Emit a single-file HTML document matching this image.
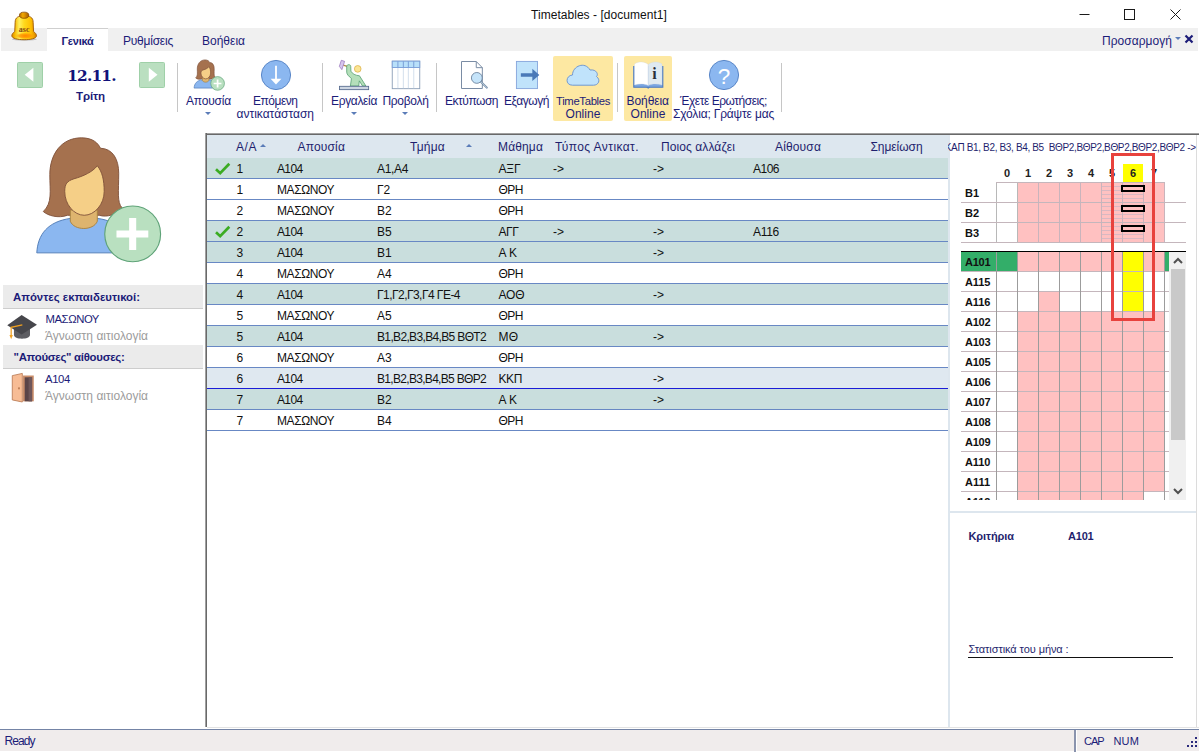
<!DOCTYPE html>
<html lang="el">
<head>
<meta charset="utf-8">
<title>Timetables - [document1]</title>
<style>
*{box-sizing:border-box;margin:0;padding:0}
html,body{width:1199px;height:752px;overflow:hidden;background:#fff}
body{position:relative;font-family:"Liberation Sans",sans-serif;font-size:12px;color:#1c1c78}
.abs{position:absolute}
.t{position:absolute;white-space:pre;color:#1c1c78}
svg{position:absolute;overflow:visible}
#tabbar{left:1px;top:28px;width:1197px;height:23px;background:#f0f0f0}
#tab1{left:47px;top:28px;width:61px;height:23px;background:#fff;border-top:1px solid #cfcfcf}
.sep{position:absolute;width:1px;background:#c6c6c6;top:63px;height:49px}
.hl{position:absolute;background:#fde8a2;border-radius:2px}
.nav{position:absolute;top:62px;width:26px;height:26px;background:#badfc0;border:1px solid #9fd0a8;border-radius:1.5px}
.dd{position:absolute;width:0;height:0;border-left:3px solid transparent;border-right:3px solid transparent;border-top:3px solid #5b7cb8}
.sec{position:absolute;left:3px;width:200px;height:24px;background:#ebebeb;border-bottom:1px solid #cdcdcd}
.row{position:absolute;left:207px;width:741px;height:21px;border-bottom:1px solid #6888c4;background:#fff}
.teal{background:#c9dedd}
.sel{background:#dfe8f0;border-bottom-color:#1c1cd8}
.hdr{position:absolute;left:207px;top:135px;width:741px;height:23px;background:#dde7ef}
.k{color:#101010}
.up{position:absolute;width:0;height:0;border-left:3px solid transparent;border-right:3px solid transparent;border-bottom:3px solid #5b7cb8}
#status{left:0;top:729px;width:1199px;height:22px;background:#f0ecec;border-top:1px solid #7484a6}
</style>
</head>
<body>
<!-- part_title -->
<div id="tabbar" class="abs"></div><div id="tab1" class="abs"></div>
<svg style="left:5px;top:5px" width="40" height="40" viewBox="0 0 752 752">
<defs>
<linearGradient id="bg1" x1="0" x2="1" y1="0" y2="0"><stop offset="0" stop-color="#d98600"/><stop offset=".12" stop-color="#f7b800"/><stop offset=".3" stop-color="#fff060"/><stop offset=".5" stop-color="#ffd91c"/><stop offset=".78" stop-color="#ffbe00"/><stop offset="1" stop-color="#d47e00"/></linearGradient>
<radialGradient id="bg2" cx=".5" cy=".5" r=".5"><stop offset="0" stop-color="#ff8400"/><stop offset=".6" stop-color="#ff9a00" stop-opacity=".8"/><stop offset="1" stop-color="#ffb000" stop-opacity="0"/></radialGradient>
<linearGradient id="bg3" x1="0" x2="1"><stop offset="0" stop-color="#b86a00"/><stop offset=".35" stop-color="#f0a800"/><stop offset=".6" stop-color="#d88c00"/><stop offset="1" stop-color="#a05800"/></linearGradient>
</defs>
<ellipse cx="365" cy="645" rx="235" ry="26" fill="#000" opacity=".2"/>
<path d="M190,330 C190,225 255,205 360,205 C465,205 530,225 530,330 L537,498 C565,520 592,545 592,578 C592,632 480,652 360,652 C240,652 128,632 128,578 C128,545 155,520 183,498 Z" fill="url(#bg1)" stroke="#9a5400" stroke-width="16"/>
<ellipse cx="380" cy="580" rx="190" ry="62" fill="url(#bg2)"/>
<ellipse cx="360" cy="192" rx="88" ry="58" fill="url(#bg3)" stroke="#804400" stroke-width="14"/>
<text x="360" y="508" text-anchor="middle" font-family="Liberation Serif,serif" font-weight="bold" font-size="150" fill="#8a4a12">asc</text>
</svg>
<div class="t" style="left:531px;top:7.84px;font:12px 'Liberation Sans';line-height:14px;letter-spacing:0.04px;color:#111;">Timetables - [document1]</div>
<svg style="left:1070px;top:0" width="129" height="28" viewBox="0 0 129 28" fill="none" stroke="#1a1a1a" stroke-width="1">
<path d="M9.5,14.5h10"/><rect x="54.5" y="9.5" width="10" height="10"/><path d="M100.5,9.5l10,10M110.5,9.5l-10,10"/></svg>
<div class="t" style="left:61.5px;top:34.69px;font:bold 11px 'Liberation Sans';line-height:13px;letter-spacing:-0.26px;">Γενικά</div>
<div class="t" style="left:123px;top:33.84px;font:12px 'Liberation Sans';line-height:14px;letter-spacing:-0.23px;">Ρυθμίσεις</div>
<div class="t" style="left:202px;top:33.84px;font:12px 'Liberation Sans';line-height:14px;letter-spacing:0.00px;">Βοήθεια</div>
<div class="t" style="left:1102px;top:33.84px;font:12px 'Liberation Sans';line-height:14px;letter-spacing:0.04px;">Προσαρμογή</div>
<div class="dd" style="left:1174.5px;top:37px;border-left-width:3px;border-right-width:3px;border-top-width:3px"></div>
<svg style="left:1184px;top:34px" width="10" height="10" viewBox="0 0 10 10"><path d="M1.5,1.5l7,7M8.5,1.5l-7,7" stroke="#1c1c78" stroke-width="2.2" fill="none"/></svg>
<!-- part_ribbon -->
<div class="nav" style="left:17px"></div><div class="nav" style="left:139px"></div>
<svg style="left:17px;top:62px" width="26" height="26" viewBox="0 0 26 26"><path d="M16.4,5.7 L7.7,12.7 L16.4,19.7 Z" fill="#fff"/></svg>
<svg style="left:139px;top:62px" width="26" height="26" viewBox="0 0 26 26"><path d="M9.8,5.7 L18.5,12.7 L9.8,19.7 Z" fill="#fff"/></svg>
<div class="t" style="left:67.2px;top:66.71px;font:bold 15.3px 'DejaVu Serif';line-height:18px;letter-spacing:-0.77px;color:#12127a;">12.11.</div>
<div class="t" style="left:76px;top:89.52px;font:bold 11.5px 'Liberation Sans';line-height:13px;letter-spacing:-0.10px;">Τρίτη</div>
<div class="sep" style="left:177px"></div>
<div class="sep" style="left:322px"></div>
<div class="sep" style="left:436px"></div>
<div class="sep" style="left:617px"></div>
<div class="sep" style="left:781px"></div>
<div class="hl" style="left:553px;top:56px;width:60px;height:65px"></div>
<div class="hl" style="left:624px;top:56px;width:48px;height:65px"></div>
<svg style="left:189.9px;top:57.9px" width="39.2" height="34.3" viewBox="0 0 859 752"><path d="M330,42 C392,42 420,72 432,98 C500,100 530,160 530,232 C530,330 520,388 548,418 C520,452 470,472 425,458 L255,458 C205,476 150,460 125,438 C175,390 160,330 160,240 C160,130 222,42 330,42 Z" fill="#a5714e" stroke="#80523a" stroke-width="15"/>
<path d="M90,660 C95,560 150,492 270,475 L415,475 C445,478 470,486 495,497 L495,660 Z" fill="#8bb7f0" stroke="#4e7ab5" stroke-width="15"/>
<path d="M270,430 L270,490 C290,542 395,542 415,490 L415,430 Z" fill="#deb46e" stroke="#a8813f" stroke-width="15"/>
<path d="M240,330 C240,290 252,274 290,262 C340,248 390,225 415,192 C442,225 452,270 452,330 C452,400 400,458 345,458 C290,458 240,400 240,330 Z" fill="#f5cf87" stroke="#80523a" stroke-width="15"/>
<circle cx="605" cy="558" r="150" fill="#b9e0c0" stroke="#5fa378" stroke-width="15"/>
<path d="M586,473h38v67h65v38h-65v67h-38v-67h-68v-38h68z" fill="#fff"/></svg>
<svg style="left:260px;top:59px" width="32" height="32" viewBox="-16 -16 32 32"><circle r="14.6" fill="#8bb7f0" stroke="#5a87c8" stroke-width="1"/><path d="M0,-9.2V5" stroke="#fff" stroke-width="1.8" fill="none"/><path d="M-5.4,3.8H5.4L0,9.6Z" fill="#fff"/></svg>
<svg style="left:335px;top:56px" width="40" height="38" viewBox="0 0 792 752">
<path d="M165,180 L238,206" stroke="#b48a42" stroke-width="24"/>
<path d="M125,85 L190,106 L136,270 L86,205 Z" fill="#d6c6ee" stroke="#8e68b4" stroke-width="13"/>
<path d="M232,205 C232,160 312,160 312,205 L315,300 C340,350 400,385 485,392 L612,594 L545,594 L482,492 L470,594 L305,594 L325,445 C270,400 232,360 232,320 Z" fill="#b4dfba" stroke="#4d9a6a" stroke-width="15"/>
<circle cx="450" cy="255" r="66" fill="#fbe594" stroke="#dcb04a" stroke-width="15"/>
<rect x="88" y="600" width="578" height="66" fill="#cdd6e2" stroke="#566a8e" stroke-width="17"/>
</svg>
<svg style="left:330px;top:55px" width="100" height="40" viewBox="0 0 1200 480">
<rect x="747" y="74" width="330" height="330" fill="#fff" stroke="#8da0b8" stroke-width="11"/>
<rect x="747" y="74" width="330" height="76" fill="#b8e0fa" stroke="#7a9fd8" stroke-width="11"/>
<path d="M815,74V150M880,74V150M940,74V150M1005,74V150" stroke="#7a9fd8" stroke-width="12"/>
<path d="M815,156V398M880,156V398M940,156V398M1005,156V398" stroke="#d3dfec" stroke-width="12"/>
</svg>
<svg style="left:450px;top:55px" width="100" height="40" viewBox="0 0 1200 480">
<path d="M138,78 L315,78 L388,152 L388,402 L138,402 Z" fill="#fff" stroke="#7a8ca4" stroke-width="12"/>
<path d="M315,78 L315,152 L388,152" fill="none" stroke="#7a8ca4" stroke-width="12"/>
<path d="M372,322 L442,392" stroke="#6e86a0" stroke-width="24" stroke-linecap="round"/>
<path d="M376,326 L440,390" stroke="#d5e6f3" stroke-width="9" stroke-linecap="round"/>
<circle cx="322" cy="275" r="65" fill="#c5e4fa" stroke="#6e86a0" stroke-width="11"/>
<rect x="797" y="77" width="253" height="326" fill="#c0e3fb" stroke="#86a6dc" stroke-width="11"/>
<path d="M850,218 H988 V165 L1072,240 L988,312 V262 H850 Z" fill="#4a79b8"/>
</svg>
<svg style="left:560px;top:55px" width="120" height="40" viewBox="0 0 1200 400">
<path d="M125,302 C50,302 55,205 125,200 C125,110 250,60 300,150 C370,140 385,200 365,215 C410,250 385,302 335,302 Z" fill="#c0e3fb" stroke="#6590d0" stroke-width="9"/>
<path d="M738,110 L738,322 L1028,322 L1028,110" fill="#7aa5e0" stroke="#4a78c0" stroke-width="11"/>
<path d="M745,90 C790,60 850,65 882,95 L882,305 C850,285 790,285 745,300 Z" fill="#fff" stroke="#c8d4e0" stroke-width="3"/>
<path d="M1020,90 C975,60 915,65 882,95 L882,305 C915,285 975,285 1020,300 Z" fill="#dfe9f0" stroke="#c8d4e0" stroke-width="3"/>
<path d="M862,322 L882,338 L902,322 Z" fill="#4a78c0"/>
<text x="945" y="242" text-anchor="middle" font-family="Liberation Serif,serif" font-weight="bold" font-size="160" fill="#2a2f3a">i</text>
</svg>
<svg style="left:708px;top:59px" width="32" height="32" viewBox="-16 -16 32 32"><circle r="14.6" fill="#8bb7f0" stroke="#5a87c8" stroke-width="1"/><text x="0" y="8.6" text-anchor="middle" font-family="Liberation Sans,sans-serif" font-size="22.5" fill="#fff">?</text></svg>
<div class="t" style="left:186px;top:93.84px;font:12px 'Liberation Sans';line-height:14px;letter-spacing:-0.19px;">Απουσία</div>
<div class="t" style="left:253px;top:93.84px;font:12px 'Liberation Sans';line-height:14px;letter-spacing:-0.49px;">Επόμενη</div>
<div class="t" style="left:236.5px;top:106.84px;font:12px 'Liberation Sans';line-height:14px;letter-spacing:-0.01px;">αντικατάσταση</div>
<div class="t" style="left:331px;top:93.84px;font:12px 'Liberation Sans';line-height:14px;letter-spacing:-0.34px;">Εργαλεία</div>
<div class="t" style="left:382.5px;top:93.84px;font:12px 'Liberation Sans';line-height:14px;letter-spacing:-0.31px;">Προβολή</div>
<div class="t" style="left:445px;top:93.84px;font:12px 'Liberation Sans';line-height:14px;letter-spacing:-0.48px;">Εκτύπωση</div>
<div class="t" style="left:504px;top:93.84px;font:12px 'Liberation Sans';line-height:14px;letter-spacing:-0.44px;">Εξαγωγή</div>
<div class="t" style="left:556px;top:94.58px;font:11.3px 'Liberation Sans';line-height:13px;letter-spacing:-0.33px;">TimeTables</div>
<div class="t" style="left:565.5px;top:106.84px;font:12px 'Liberation Sans';line-height:14px;letter-spacing:0.05px;">Online</div>
<div class="t" style="left:626.5px;top:93.84px;font:12px 'Liberation Sans';line-height:14px;letter-spacing:-0.07px;">Βοήθεια</div>
<div class="t" style="left:630.5px;top:106.84px;font:12px 'Liberation Sans';line-height:14px;letter-spacing:0.05px;">Online</div>
<div class="t" style="left:680px;top:93.84px;font:12px 'Liberation Sans';line-height:14px;letter-spacing:-0.47px;">Έχετε Ερωτήσεις;</div>
<div class="t" style="left:673px;top:106.84px;font:12px 'Liberation Sans';line-height:14px;letter-spacing:-0.17px;">Σχόλια; Γράψτε μας</div>
<div class="dd" style="left:205px;top:112px"></div>
<div class="dd" style="left:350.5px;top:112px"></div>
<div class="dd" style="left:402px;top:112px"></div>
<!-- part_left -->
<svg style="left:20px;top:130px" width="160" height="140" viewBox="0 0 859 752"><path d="M330,42 C392,42 420,72 432,98 C500,100 530,160 530,232 C530,330 520,388 548,418 C520,452 470,472 425,458 L255,458 C205,476 150,460 125,438 C175,390 160,330 160,240 C160,130 222,42 330,42 Z" fill="#a5714e" stroke="#80523a" stroke-width="5"/>
<path d="M90,660 C95,560 150,492 270,475 L415,475 C445,478 470,486 495,497 L495,660 Z" fill="#8bb7f0" stroke="#4e7ab5" stroke-width="5"/>
<path d="M270,430 L270,490 C290,542 395,542 415,490 L415,430 Z" fill="#deb46e" stroke="#a8813f" stroke-width="5"/>
<path d="M240,330 C240,290 252,274 290,262 C340,248 390,225 415,192 C442,225 452,270 452,330 C452,400 400,458 345,458 C290,458 240,400 240,330 Z" fill="#f5cf87" stroke="#80523a" stroke-width="5"/>
<circle cx="605" cy="558" r="150" fill="#b9e0c0" stroke="#5fa378" stroke-width="6"/>
<path d="M586,473h38v67h65v38h-65v67h-38v-67h-68v-38h68z" fill="#fff"/></svg>
<div class="sec" style="top:285px"></div><div class="sec" style="top:345px"></div>
<div class="t" style="left:13px;top:290.55px;font:bold 11.4px 'Liberation Sans';line-height:13px;letter-spacing:-0.01px;">Απόντες εκπαιδευτικοί:</div>
<div class="t" style="left:13.5px;top:350.55px;font:bold 11.4px 'Liberation Sans';line-height:13px;letter-spacing:-0.27px;">&quot;Απούσες&quot; αίθουσες:</div>
<div class="t" style="left:45.5px;top:312.58px;font:11.3px 'Liberation Sans';line-height:13px;letter-spacing:-0.43px;">ΜΑΣΩΝΟΥ</div>
<div class="t" style="left:45px;top:328.84px;font:12px 'Liberation Sans';line-height:14px;letter-spacing:0.01px;color:#9c9c9c;">Άγνωστη αιτιολογία</div>
<div class="t" style="left:45px;top:372.58px;font:11.3px 'Liberation Sans';line-height:13px;letter-spacing:-0.35px;">Α104</div>
<div class="t" style="left:45px;top:388.84px;font:12px 'Liberation Sans';line-height:14px;letter-spacing:0.01px;color:#9c9c9c;">Άγνωστη αιτιολογία</div>
<svg style="left:0;top:305px" width="60" height="105" viewBox="0 0 430 752">
<path d="M100,165 L100,215 C100,250 215,250 215,215 L215,165 Z" fill="#5d5d62"/>
<path d="M155,72 L265,141 L155,211 L52,145 Z" fill="#46464b"/>
<path d="M160,143 L80,160 L80,222" fill="none" stroke="#f0a020" stroke-width="9"/>
<path d="M68,215 L92,215 L80,245 Z" fill="#f0a020"/>
<rect x="165" y="505" width="77" height="185" fill="#c98d6a"/>
<rect x="177" y="518" width="53" height="172" fill="#5a4448"/>
<rect x="205" y="518" width="25" height="172" fill="#6e565a"/>
<path d="M88,506 L160,490 L160,695 L88,680 Z" fill="#f7bc95" stroke="#b87850" stroke-width="6"/>
<rect x="130" y="590" width="12" height="14" fill="#b87850"/>
</svg>
<!-- part_grid -->
<div class="abs" style="left:205px;top:133px;width:994px;height:2px;background:#696969;border-top:1px solid #a0a0a0"></div>
<div class="abs" style="left:205px;top:133px;width:2px;height:594px;background:#696969;border-left:1px solid #a0a0a0"></div>
<div class="abs" style="left:207px;top:727px;width:992px;height:1px;background:#e3e3e3"></div>
<div class="hdr"></div>
<div class="t" style="left:236px;top:139.84px;font:12px 'Liberation Sans';line-height:14px;letter-spacing:0.55px;color:#1f1f6e;">Α/Α</div>
<div class="up" style="left:260px;top:144px"></div>
<div class="t" style="left:297.5px;top:139.84px;font:12px 'Liberation Sans';line-height:14px;letter-spacing:0.16px;color:#1f1f6e;">Απουσία</div>
<div class="t" style="left:410px;top:139.84px;font:12px 'Liberation Sans';line-height:14px;letter-spacing:0.22px;color:#1f1f6e;">Τμήμα</div>
<div class="up" style="left:466px;top:144px"></div>
<div class="t" style="left:498px;top:139.84px;font:12px 'Liberation Sans';line-height:14px;letter-spacing:0.14px;color:#1f1f6e;">Μάθημα</div>
<div class="t" style="left:555px;top:139.84px;font:12px 'Liberation Sans';line-height:14px;letter-spacing:0.42px;color:#1f1f6e;">Τύπος Αντικατ.</div>
<div class="t" style="left:661px;top:139.84px;font:12px 'Liberation Sans';line-height:14px;letter-spacing:0.09px;color:#1f1f6e;">Ποιος αλλάζει</div>
<div class="t" style="left:775px;top:139.84px;font:12px 'Liberation Sans';line-height:14px;letter-spacing:0.15px;color:#1f1f6e;">Αίθουσα</div>
<div class="t" style="left:870.5px;top:139.84px;font:12px 'Liberation Sans';line-height:14px;letter-spacing:-0.06px;color:#1f1f6e;">Σημείωση</div>
<div class="row teal" style="top:158px"></div>
<svg style="left:213px;top:161px" width="18" height="14" viewBox="0 0 18 14"><path d="M3,8.3 L7.2,12.2 L16.3,2.8" fill="none" stroke="#3bac22" stroke-width="2.7"/></svg>
<div class="t" style="left:236.5px;top:161.84px;font:12px 'Liberation Sans';line-height:14px;letter-spacing:0;color:#111;">1</div>
<div class="t" style="left:277px;top:161.84px;font:12px 'Liberation Sans';line-height:14px;letter-spacing:-0.63px;color:#111;">Α104</div>
<div class="t" style="left:377px;top:161.84px;font:12px 'Liberation Sans';line-height:14px;letter-spacing:-0.34px;color:#111;">Α1,Α4</div>
<div class="t" style="left:498.5px;top:161.84px;font:12px 'Liberation Sans';line-height:14px;letter-spacing:-0.14px;color:#111;">ΑΞΓ</div>
<div class="t" style="left:553px;top:161.84px;font:12px 'Liberation Sans';line-height:14px;letter-spacing:-0.01px;color:#111;">-&gt;</div>
<div class="t" style="left:653px;top:161.84px;font:12px 'Liberation Sans';line-height:14px;letter-spacing:-0.01px;color:#111;">-&gt;</div>
<div class="t" style="left:753px;top:161.84px;font:12px 'Liberation Sans';line-height:14px;letter-spacing:-0.51px;color:#111;">Α106</div>
<div class="row " style="top:179px"></div>
<div class="t" style="left:236.5px;top:182.84px;font:12px 'Liberation Sans';line-height:14px;letter-spacing:0;color:#111;">1</div>
<div class="t" style="left:277px;top:182.84px;font:12px 'Liberation Sans';line-height:14px;letter-spacing:-0.43px;color:#111;">ΜΑΣΩΝΟΥ</div>
<div class="t" style="left:377px;top:182.84px;font:12px 'Liberation Sans';line-height:14px;letter-spacing:0;color:#111;">Γ2</div>
<div class="t" style="left:498.5px;top:182.84px;font:12px 'Liberation Sans';line-height:14px;letter-spacing:-0.51px;color:#111;">ΘΡΗ</div>
<div class="row " style="top:200px"></div>
<div class="t" style="left:236.5px;top:203.84px;font:12px 'Liberation Sans';line-height:14px;letter-spacing:0;color:#111;">2</div>
<div class="t" style="left:277px;top:203.84px;font:12px 'Liberation Sans';line-height:14px;letter-spacing:-0.43px;color:#111;">ΜΑΣΩΝΟΥ</div>
<div class="t" style="left:377px;top:203.84px;font:12px 'Liberation Sans';line-height:14px;letter-spacing:0;color:#111;">Β2</div>
<div class="t" style="left:498.5px;top:203.84px;font:12px 'Liberation Sans';line-height:14px;letter-spacing:-0.51px;color:#111;">ΘΡΗ</div>
<div class="row teal" style="top:221px"></div>
<svg style="left:213px;top:224px" width="18" height="14" viewBox="0 0 18 14"><path d="M3,8.3 L7.2,12.2 L16.3,2.8" fill="none" stroke="#3bac22" stroke-width="2.7"/></svg>
<div class="t" style="left:236.5px;top:224.84px;font:12px 'Liberation Sans';line-height:14px;letter-spacing:0;color:#111;">2</div>
<div class="t" style="left:277px;top:224.84px;font:12px 'Liberation Sans';line-height:14px;letter-spacing:-0.63px;color:#111;">Α104</div>
<div class="t" style="left:377px;top:224.84px;font:12px 'Liberation Sans';line-height:14px;letter-spacing:0;color:#111;">Β5</div>
<div class="t" style="left:498.5px;top:224.84px;font:12px 'Liberation Sans';line-height:14px;letter-spacing:-0.41px;color:#111;">ΑΓΓ</div>
<div class="t" style="left:553px;top:224.84px;font:12px 'Liberation Sans';line-height:14px;letter-spacing:-0.01px;color:#111;">-&gt;</div>
<div class="t" style="left:653px;top:224.84px;font:12px 'Liberation Sans';line-height:14px;letter-spacing:-0.01px;color:#111;">-&gt;</div>
<div class="t" style="left:753px;top:224.84px;font:12px 'Liberation Sans';line-height:14px;letter-spacing:-0.29px;color:#111;">Α116</div>
<div class="row teal" style="top:242px"></div>
<div class="t" style="left:236.5px;top:245.84px;font:12px 'Liberation Sans';line-height:14px;letter-spacing:0;color:#111;">3</div>
<div class="t" style="left:277px;top:245.84px;font:12px 'Liberation Sans';line-height:14px;letter-spacing:-0.63px;color:#111;">Α104</div>
<div class="t" style="left:377px;top:245.84px;font:12px 'Liberation Sans';line-height:14px;letter-spacing:0;color:#111;">Β1</div>
<div class="t" style="left:498.5px;top:245.84px;font:12px 'Liberation Sans';line-height:14px;letter-spacing:-0.06px;color:#111;">Α Κ</div>
<div class="t" style="left:653px;top:245.84px;font:12px 'Liberation Sans';line-height:14px;letter-spacing:-0.01px;color:#111;">-&gt;</div>
<div class="row " style="top:263px"></div>
<div class="t" style="left:236.5px;top:266.84px;font:12px 'Liberation Sans';line-height:14px;letter-spacing:0;color:#111;">4</div>
<div class="t" style="left:277px;top:266.84px;font:12px 'Liberation Sans';line-height:14px;letter-spacing:-0.43px;color:#111;">ΜΑΣΩΝΟΥ</div>
<div class="t" style="left:377px;top:266.84px;font:12px 'Liberation Sans';line-height:14px;letter-spacing:0;color:#111;">Α4</div>
<div class="t" style="left:498.5px;top:266.84px;font:12px 'Liberation Sans';line-height:14px;letter-spacing:-0.51px;color:#111;">ΘΡΗ</div>
<div class="row teal" style="top:284px"></div>
<div class="t" style="left:236.5px;top:287.84px;font:12px 'Liberation Sans';line-height:14px;letter-spacing:0;color:#111;">4</div>
<div class="t" style="left:277px;top:287.84px;font:12px 'Liberation Sans';line-height:14px;letter-spacing:-0.63px;color:#111;">Α104</div>
<div class="t" style="left:377px;top:287.84px;font:12px 'Liberation Sans';line-height:14px;letter-spacing:-0.55px;color:#111;">Γ1,Γ2,Γ3,Γ4 ΓΕ-4</div>
<div class="t" style="left:498.5px;top:287.84px;font:12px 'Liberation Sans';line-height:14px;letter-spacing:-0.14px;color:#111;">ΑΟΘ</div>
<div class="t" style="left:653px;top:287.84px;font:12px 'Liberation Sans';line-height:14px;letter-spacing:-0.01px;color:#111;">-&gt;</div>
<div class="row " style="top:305px"></div>
<div class="t" style="left:236.5px;top:308.84px;font:12px 'Liberation Sans';line-height:14px;letter-spacing:0;color:#111;">5</div>
<div class="t" style="left:277px;top:308.84px;font:12px 'Liberation Sans';line-height:14px;letter-spacing:-0.43px;color:#111;">ΜΑΣΩΝΟΥ</div>
<div class="t" style="left:377px;top:308.84px;font:12px 'Liberation Sans';line-height:14px;letter-spacing:0;color:#111;">Α5</div>
<div class="t" style="left:498.5px;top:308.84px;font:12px 'Liberation Sans';line-height:14px;letter-spacing:-0.51px;color:#111;">ΘΡΗ</div>
<div class="row teal" style="top:326px"></div>
<div class="t" style="left:236.5px;top:329.84px;font:12px 'Liberation Sans';line-height:14px;letter-spacing:0;color:#111;">5</div>
<div class="t" style="left:277px;top:329.84px;font:12px 'Liberation Sans';line-height:14px;letter-spacing:-0.63px;color:#111;">Α104</div>
<div class="t" style="left:377px;top:329.84px;font:12px 'Liberation Sans';line-height:14px;letter-spacing:-0.65px;color:#111;">Β1,Β2,Β3,Β4,Β5 ΒΘΤ2</div>
<div class="t" style="left:498.5px;top:329.84px;font:12px 'Liberation Sans';line-height:14px;letter-spacing:0.33px;color:#111;">ΜΘ</div>
<div class="t" style="left:653px;top:329.84px;font:12px 'Liberation Sans';line-height:14px;letter-spacing:-0.01px;color:#111;">-&gt;</div>
<div class="row " style="top:347px"></div>
<div class="t" style="left:236.5px;top:350.84px;font:12px 'Liberation Sans';line-height:14px;letter-spacing:0;color:#111;">6</div>
<div class="t" style="left:277px;top:350.84px;font:12px 'Liberation Sans';line-height:14px;letter-spacing:-0.43px;color:#111;">ΜΑΣΩΝΟΥ</div>
<div class="t" style="left:377px;top:350.84px;font:12px 'Liberation Sans';line-height:14px;letter-spacing:0;color:#111;">Α3</div>
<div class="t" style="left:498.5px;top:350.84px;font:12px 'Liberation Sans';line-height:14px;letter-spacing:-0.51px;color:#111;">ΘΡΗ</div>
<div class="row sel" style="top:368px"></div>
<div class="t" style="left:236.5px;top:371.84px;font:12px 'Liberation Sans';line-height:14px;letter-spacing:0;color:#111;">6</div>
<div class="t" style="left:277px;top:371.84px;font:12px 'Liberation Sans';line-height:14px;letter-spacing:-0.63px;color:#111;">Α104</div>
<div class="t" style="left:377px;top:371.84px;font:12px 'Liberation Sans';line-height:14px;letter-spacing:-0.69px;color:#111;">Β1,Β2,Β3,Β4,Β5 ΒΘΡ2</div>
<div class="t" style="left:498.5px;top:371.84px;font:12px 'Liberation Sans';line-height:14px;letter-spacing:-0.40px;color:#111;">ΚΚΠ</div>
<div class="t" style="left:653px;top:371.84px;font:12px 'Liberation Sans';line-height:14px;letter-spacing:-0.01px;color:#111;">-&gt;</div>
<div class="row teal" style="top:389px"></div>
<div class="t" style="left:236.5px;top:392.84px;font:12px 'Liberation Sans';line-height:14px;letter-spacing:0;color:#111;">7</div>
<div class="t" style="left:277px;top:392.84px;font:12px 'Liberation Sans';line-height:14px;letter-spacing:-0.63px;color:#111;">Α104</div>
<div class="t" style="left:377px;top:392.84px;font:12px 'Liberation Sans';line-height:14px;letter-spacing:0;color:#111;">Β2</div>
<div class="t" style="left:498.5px;top:392.84px;font:12px 'Liberation Sans';line-height:14px;letter-spacing:-0.06px;color:#111;">Α Κ</div>
<div class="t" style="left:653px;top:392.84px;font:12px 'Liberation Sans';line-height:14px;letter-spacing:-0.01px;color:#111;">-&gt;</div>
<div class="row " style="top:410px"></div>
<div class="t" style="left:236.5px;top:413.84px;font:12px 'Liberation Sans';line-height:14px;letter-spacing:0;color:#111;">7</div>
<div class="t" style="left:277px;top:413.84px;font:12px 'Liberation Sans';line-height:14px;letter-spacing:-0.43px;color:#111;">ΜΑΣΩΝΟΥ</div>
<div class="t" style="left:377px;top:413.84px;font:12px 'Liberation Sans';line-height:14px;letter-spacing:0;color:#111;">Β4</div>
<div class="t" style="left:498.5px;top:413.84px;font:12px 'Liberation Sans';line-height:14px;letter-spacing:-0.51px;color:#111;">ΘΡΗ</div>
<!-- part_right -->
<div class="abs" style="left:948px;top:135px;width:2px;height:592px;background:#dde6ee"></div>
<div class="abs" style="left:1196px;top:135px;width:1px;height:592px;background:#dcdcdc"></div>
<div class="abs" style="left:950px;top:511px;width:246px;height:2px;background:#dde6ee"></div>
<div class="abs" style="left:948px;top:139px;width:248px;height:16px;overflow:hidden"><div class="t" style="left:0px;top:2.54px;font:10px 'Liberation Sans';line-height:12px;letter-spacing:-0.35px;color:#1f1f6e;left:auto;right:0.3px;">ΚΑΠ Β1, Β2, Β3, Β4, Β5  ΒΘΡ2,ΒΘΡ2,ΒΘΡ2,ΒΘΡ2,ΒΘΡ2 -&gt;</div></div>
<div class="t" style="left:1004px;top:166.69px;font:bold 11px 'Liberation Sans';line-height:13px;letter-spacing:0;color:#222;">0</div>
<div class="t" style="left:1025px;top:166.69px;font:bold 11px 'Liberation Sans';line-height:13px;letter-spacing:0;color:#222;">1</div>
<div class="t" style="left:1046px;top:166.69px;font:bold 11px 'Liberation Sans';line-height:13px;letter-spacing:0;color:#222;">2</div>
<div class="t" style="left:1067px;top:166.69px;font:bold 11px 'Liberation Sans';line-height:13px;letter-spacing:0;color:#222;">3</div>
<div class="t" style="left:1088px;top:166.69px;font:bold 11px 'Liberation Sans';line-height:13px;letter-spacing:0;color:#222;">4</div>
<div class="t" style="left:1109px;top:166.69px;font:bold 11px 'Liberation Sans';line-height:13px;letter-spacing:0;color:#222;">5</div>
<div class="abs" style="left:1123px;top:164px;width:20px;height:18px;background:#ffff00"></div>
<div class="t" style="left:1130px;top:166.69px;font:bold 11px 'Liberation Sans';line-height:13px;letter-spacing:0;color:#222;">6</div>
<div class="t" style="left:1151px;top:166.69px;font:bold 11px 'Liberation Sans';line-height:13px;letter-spacing:0;color:#222;">7</div>
<div class="abs" style="left:1017px;top:182px;width:148px;height:60px;background:#ffc1c1"></div>
<div class="abs" style="left:1102px;top:183px;width:41px;height:59px;background:repeating-linear-gradient(to bottom,#ffc1c1 0,#ffc1c1 3px,#d9b8c2 3px,#d9b8c2 4px)"></div>
<div class="abs" style="left:996px;top:182px;width:1px;height:60px;background:#b8b8b8"></div>
<div class="abs" style="left:1017px;top:182px;width:1px;height:60px;background:#b8b8b8"></div>
<div class="abs" style="left:1038px;top:182px;width:1px;height:60px;background:#c9b4bc"></div>
<div class="abs" style="left:1059px;top:182px;width:1px;height:60px;background:#c9b4bc"></div>
<div class="abs" style="left:1080px;top:182px;width:1px;height:60px;background:#c9b4bc"></div>
<div class="abs" style="left:1101px;top:182px;width:1px;height:60px;background:#c9b4bc"></div>
<div class="abs" style="left:1122px;top:182px;width:1px;height:60px;background:#c9b4bc"></div>
<div class="abs" style="left:1143px;top:182px;width:1px;height:60px;background:#c9b4bc"></div>
<div class="abs" style="left:1164px;top:182px;width:1px;height:60px;background:#c9b4bc"></div>
<div class="abs" style="left:996px;top:182px;width:169px;height:1px;background:#c4b6bc"></div>
<div class="abs" style="left:961px;top:202px;width:225px;height:1px;background:#c4b6bc"></div>
<div class="abs" style="left:961px;top:222px;width:225px;height:1px;background:#c4b6bc"></div>
<div class="abs" style="left:961px;top:242px;width:225px;height:1px;background:#c4b6bc"></div>
<div class="t" style="left:965px;top:186.69px;font:bold 11px 'Liberation Sans';line-height:13px;letter-spacing:0;color:#111;">Β1</div>
<div class="abs" style="left:1121px;top:185px;width:24px;height:7px;border:2px solid #000;background:#ffc1c1"></div>
<div class="t" style="left:965px;top:206.69px;font:bold 11px 'Liberation Sans';line-height:13px;letter-spacing:0;color:#111;">Β2</div>
<div class="abs" style="left:1121px;top:205px;width:24px;height:7px;border:2px solid #000;background:#ffc1c1"></div>
<div class="t" style="left:965px;top:226.69px;font:bold 11px 'Liberation Sans';line-height:13px;letter-spacing:0;color:#111;">Β3</div>
<div class="abs" style="left:1121px;top:225px;width:24px;height:7px;border:2px solid #000;background:#ffc1c1"></div>
<div class="abs" style="left:961px;top:252px;width:225px;height:248px;overflow:hidden">
<div class="abs" style="left:0px;top:0px;width:56px;height:20px;background:#33ae69"></div>
<div class="abs" style="left:56px;top:0px;width:148px;height:20px;background:#ffc1c1"></div>
<div class="abs" style="left:204px;top:0px;width:4px;height:20px;background:#33ae69"></div>
<div class="abs" style="left:77px;top:40px;width:21px;height:20px;background:#ffc1c1"></div>
<div class="abs" style="left:56px;top:60px;width:148px;height:180px;background:#ffc1c1"></div>
<div class="abs" style="left:56px;top:240px;width:127px;height:20px;background:#ffc1c1"></div>
<div class="abs" style="left:162px;top:0px;width:20px;height:60px;background:#ffff00"></div>
<div class="abs" style="left:0px;top:19px;width:208px;height:1px;background:#c4b6bc"></div>
<div class="abs" style="left:0px;top:39px;width:208px;height:1px;background:#c4b6bc"></div>
<div class="abs" style="left:0px;top:59px;width:208px;height:1px;background:#c4b6bc"></div>
<div class="abs" style="left:0px;top:79px;width:208px;height:1px;background:#c4b6bc"></div>
<div class="abs" style="left:0px;top:99px;width:208px;height:1px;background:#c4b6bc"></div>
<div class="abs" style="left:0px;top:119px;width:208px;height:1px;background:#c4b6bc"></div>
<div class="abs" style="left:0px;top:139px;width:208px;height:1px;background:#c4b6bc"></div>
<div class="abs" style="left:0px;top:159px;width:208px;height:1px;background:#c4b6bc"></div>
<div class="abs" style="left:0px;top:179px;width:208px;height:1px;background:#c4b6bc"></div>
<div class="abs" style="left:0px;top:199px;width:208px;height:1px;background:#c4b6bc"></div>
<div class="abs" style="left:0px;top:219px;width:208px;height:1px;background:#c4b6bc"></div>
<div class="abs" style="left:0px;top:239px;width:208px;height:1px;background:#c4b6bc"></div>
<div class="abs" style="left:35px;top:0px;width:1px;height:260px;background:#9c9c9c"></div>
<div class="abs" style="left:56px;top:0px;width:1px;height:260px;background:#9c9c9c"></div>
<div class="abs" style="left:77px;top:0px;width:1px;height:260px;background:#9c9c9c"></div>
<div class="abs" style="left:98px;top:0px;width:1px;height:260px;background:#9c9c9c"></div>
<div class="abs" style="left:119px;top:0px;width:1px;height:260px;background:#9c9c9c"></div>
<div class="abs" style="left:140px;top:0px;width:1px;height:260px;background:#9c9c9c"></div>
<div class="abs" style="left:161px;top:0px;width:1px;height:260px;background:#9c9c9c"></div>
<div class="abs" style="left:182px;top:0px;width:1px;height:260px;background:#9c9c9c"></div>
<div class="abs" style="left:203px;top:0px;width:1px;height:260px;background:#9c9c9c"></div>
<div class="t" style="left:4px;top:3.69px;font:bold 11px 'Liberation Sans';line-height:13px;letter-spacing:-0.25px;color:#111;">Α101</div>
<div class="t" style="left:4px;top:23.69px;font:bold 11px 'Liberation Sans';line-height:13px;letter-spacing:-0.10px;color:#111;">Α115</div>
<div class="t" style="left:4px;top:43.69px;font:bold 11px 'Liberation Sans';line-height:13px;letter-spacing:-0.10px;color:#111;">Α116</div>
<div class="t" style="left:4px;top:63.69px;font:bold 11px 'Liberation Sans';line-height:13px;letter-spacing:-0.25px;color:#111;">Α102</div>
<div class="t" style="left:4px;top:83.69px;font:bold 11px 'Liberation Sans';line-height:13px;letter-spacing:-0.25px;color:#111;">Α103</div>
<div class="t" style="left:4px;top:103.69px;font:bold 11px 'Liberation Sans';line-height:13px;letter-spacing:-0.25px;color:#111;">Α105</div>
<div class="t" style="left:4px;top:123.69px;font:bold 11px 'Liberation Sans';line-height:13px;letter-spacing:-0.25px;color:#111;">Α106</div>
<div class="t" style="left:4px;top:143.69px;font:bold 11px 'Liberation Sans';line-height:13px;letter-spacing:-0.25px;color:#111;">Α107</div>
<div class="t" style="left:4px;top:163.69px;font:bold 11px 'Liberation Sans';line-height:13px;letter-spacing:-0.25px;color:#111;">Α108</div>
<div class="t" style="left:4px;top:183.69px;font:bold 11px 'Liberation Sans';line-height:13px;letter-spacing:-0.25px;color:#111;">Α109</div>
<div class="t" style="left:4px;top:203.69px;font:bold 11px 'Liberation Sans';line-height:13px;letter-spacing:-0.10px;color:#111;">Α110</div>
<div class="t" style="left:4px;top:223.69px;font:bold 11px 'Liberation Sans';line-height:13px;letter-spacing:0.05px;color:#111;">Α111</div>
<div class="t" style="left:4px;top:243.69px;font:bold 11px 'Liberation Sans';line-height:13px;letter-spacing:-0.10px;color:#111;">Α112</div>
<div class="abs" style="left:208px;top:0px;width:17px;height:248px;background:#f0f0f0"></div>
<div class="abs" style="left:209.5px;top:17px;width:14px;height:171px;background:#c9c9c9"></div>
<svg style="left:212px;top:5px" width="10" height="7" viewBox="0 0 10 7"><path d="M1,6 L5,2 L9,6" fill="none" stroke="#505050" stroke-width="2"/></svg>
<svg style="left:212px;top:236px" width="10" height="7" viewBox="0 0 10 7"><path d="M1,1 L5,5 L9,1" fill="none" stroke="#505050" stroke-width="2"/></svg>
</div>
<div class="abs" style="left:961px;top:251px;width:225px;height:1px;background:#000"></div>
<div class="abs" style="left:1111px;top:153px;width:44px;height:168px;border:3px solid #e8423d"></div>
<div class="t" style="left:968.5px;top:529.69px;font:bold 11px 'Liberation Sans';line-height:13px;letter-spacing:-0.07px;color:#1f1f6e;">Κριτήρια</div>
<div class="t" style="left:1068px;top:529.69px;font:bold 11px 'Liberation Sans';line-height:13px;letter-spacing:-0.20px;color:#1f1f6e;">Α101</div>
<div class="t" style="left:968.5px;top:643.19px;font:11px 'Liberation Sans';line-height:13px;letter-spacing:-0.08px;color:#1f1f6e;">Στατιστικά του μήνα :</div>
<div class="abs" style="left:968px;top:656.5px;width:205px;height:1px;background:#111"></div>
<!-- part_status -->
<div id="status" class="abs"></div>
<div class="t" style="left:4.5px;top:733.84px;font:12px 'Liberation Sans';line-height:14px;letter-spacing:-0.94px;">Ready</div>
<div class="abs" style="left:1074px;top:730px;width:3px;height:22px;background:#8a93ad;border-right:1px solid #fff"></div>
<div class="t" style="left:1084px;top:734.69px;font:11px 'Liberation Sans';line-height:13px;letter-spacing:-1.04px;">CAP</div>
<div class="t" style="left:1113.5px;top:734.69px;font:11px 'Liberation Sans';line-height:13px;letter-spacing:0.15px;">NUM</div>
<svg style="left:1186px;top:736px" width="12" height="12" viewBox="0 0 12 12" fill="#2a2a7c"><rect x="9" y="9" width="2" height="2"/><rect x="9" y="5" width="2" height="2"/><rect x="5" y="9" width="2" height="2"/><rect x="9" y="1" width="2" height="2"/><rect x="5" y="5" width="2" height="2"/><rect x="1" y="9" width="2" height="2"/></svg>
</body>
</html>
